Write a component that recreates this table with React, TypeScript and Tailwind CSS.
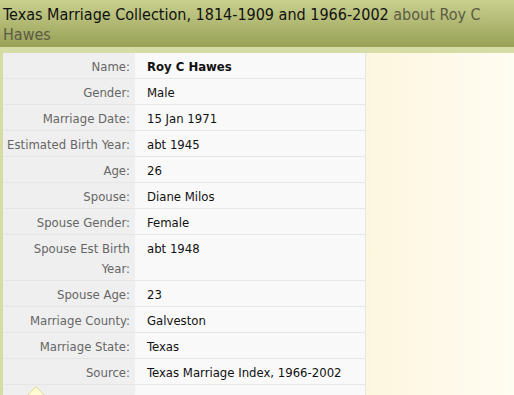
const rows: { label: string; value: string; bold?: boolean; tall?: boolean }[] = [
  { label: "Name:", value: "Roy C Hawes", bold: true },
  { label: "Gender:", value: "Male" },
  { label: "Marriage Date:", value: "15 Jan 1971" },
  { label: "Estimated Birth Year:", value: "abt 1945" },
  { label: "Age:", value: "26" },
  { label: "Spouse:", value: "Diane Milos" },
  { label: "Spouse Gender:", value: "Female" },
  { label: "Spouse Est Birth Year:", value: "abt 1948", tall: true },
  { label: "Spouse Age:", value: "23" },
  { label: "Marriage County:", value: "Galveston" },
  { label: "Marriage State:", value: "Texas" },
  { label: "Source:", value: "Texas Marriage Index, 1966-2002" },
];

export default function App() {
  return (
    <div className="h-[395px] w-[514px] overflow-hidden bg-[#fdf7e1] font-['DejaVu_Sans_Condensed','DejaVu_Sans',sans-serif]">
      {/* header */}
      <div className="h-[47px] bg-gradient-to-b from-[#c9d08f] to-[#98a156] px-[3px] pt-[5px] text-[16px] leading-[20px] text-[#111]">
        Texas Marriage Collection, 1814-1909 and 1966-2002{" "}
        <span className="text-[#5b5b45]">about Roy C Hawes</span>
      </div>
      <div className="h-[6px] bg-[#d6dca6]" />

      <div className="flex">
        <div className="w-[3px] shrink-0 bg-[#d6dca6]" />
        <div className="w-[363px] shrink-0 border-r border-[#e6e6e6] text-[13px] leading-[20px]">
          {rows.map((r) => (
            <div key={r.label} className="flex border-b border-[#e6e6e6]">
              <div
                className={`w-[132px] shrink-0 bg-[#efefef] pr-[5px] pt-[4px] pb-[1px] text-right text-[#666] ${
                  r.tall ? "pl-[24px]" : ""
                }`}
              >
                {r.label}
              </div>
              <div
                className={`flex-1 bg-[#f9f9f9] pl-[12px] pt-[4px] text-[#111] ${
                  r.bold ? "font-bold" : ""
                }`}
              >
                {r.value}
              </div>
            </div>
          ))}
          <div className="flex h-[20px]">
            <div className="relative w-[132px] shrink-0 bg-[#efefef]">
              <svg className="absolute left-[22px] top-[0px]" width="22" height="12" viewBox="0 0 22 12">
                <path d="M1 12 L11 1.5 L21 12" fill="#fffbd2" stroke="#e3d68c" strokeWidth="1" />
              </svg>
            </div>
            <div className="flex-1 bg-[#f9f9f9]" />
          </div>
        </div>
        <div className="flex-1 bg-gradient-to-r from-[#fdf6df] to-[#fffcf1]" />
      </div>
    </div>
  );
}
